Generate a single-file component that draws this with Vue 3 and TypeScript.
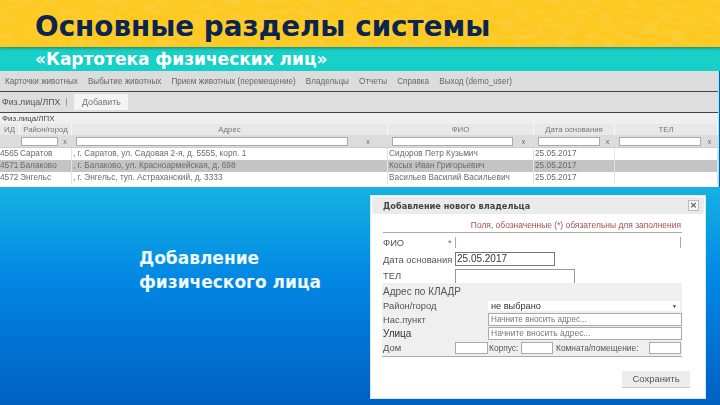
<script setup lang="ts">
const menu = ['Карточки животных', 'Выбытие животных', 'Прием животных (перемещение)', 'Владельцы', 'Отчеты', 'Справка', 'Выход (demo_user)']

const columns = [
  { title: 'ИД', filter: 0 },
  { title: 'Район/город', filter: 37 },
  { title: 'Адрес', filter: 272 },
  { title: 'ФИО', filter: 121 },
  { title: 'Дата основания', filter: 62 },
  { title: 'ТЕЛ', filter: 82 }
]

const rows = [
  ['4565', 'Саратов', ', г. Саратов, ул. Садовая 2-я, д. 5555, корп. 1', 'Сидоров Петр Кузьмич', '25.05.2017', ''],
  ['4571', 'Балаково', ', г. Балаково, ул. Красноармейская, д. 698', 'Косых Иван Григорьевич', '25.05.2017', ''],
  ['4572', 'Энгельс', ', г. Энгельс, туп. Астраханский, д. 3333', 'Васильев Василий Васильевич', '25.05.2017', '']
]
</script>

<template>
  <div class="slide">
    <header class="head">
      <svg class="grain" width="720" height="47" aria-hidden="true">
        <filter id="paper">
          <feTurbulence type="fractalNoise" baseFrequency="0.07 0.2" numOctaves="3" seed="7" />
          <feColorMatrix values="0 0 0 0 0.95  0 0 0 0 0.62  0 0 0 0 0.05  2.4 0 0 0 -1" />
        </filter>
        <rect width="720" height="47" filter="url(#paper)" />
      </svg>
      <h1>Основные разделы системы</h1>
    </header>
    <div class="band">«Картотека физических лиц»</div>

    <section class="app">
      <nav class="menu">
        <span v-for="m in menu" :key="m">{{ m }}</span>
      </nav>
      <div class="tabs">
        <span>Физ.лица/ЛПХ</span>
        <i class="sep"></i>
        <span class="tab">Добавить</span>
      </div>
      <div class="caption">Физ.лица/ЛПХ</div>
      <div class="grid head-row">
        <div v-for="c in columns" :key="c.title" class="cell">{{ c.title }}</div>
      </div>
      <div class="grid filter-row">
        <div v-for="c in columns" :key="c.title" class="fcell">
          <template v-if="c.filter">
            <b class="finput" :style="{ width: c.filter + 'px' }"></b>
            <em>x</em>
          </template>
        </div>
      </div>
      <div v-for="(r, i) in rows" :key="r[0]" class="grid row" :class="{ picked: i === 1 }">
        <div v-for="(v, j) in r" :key="j" class="cell">{{ v }}</div>
      </div>
    </section>

    <main class="body">
      <p class="note">Добавление<br>физического лица</p>
    </main>

    <aside class="dialog">
      <div class="dlg-title">
        <span>Добавление нового владельца</span>
        <b class="close">×</b>
      </div>
      <div class="hint">Поля, обозначенные (*) обязательны для заполнения</div>
      <div class="form">
        <div class="line first">
          <label>ФИО<i>*</i></label>
          <b class="field fio"></b>
        </div>
        <div class="line">
          <label>Дата основания</label>
          <b class="field date">25.05.2017</b>
        </div>
        <div class="line">
          <label>ТЕЛ</label>
          <b class="field tel"></b>
        </div>
      </div>
      <div class="kladr">
        <div class="k-title">Адрес по КЛАДР</div>
        <div class="line city">
          <label>Район/город</label>
          <b class="select">не выбрано<u>▼</u></b>
        </div>
        <div class="line">
          <label>Нас.пункт</label>
          <b class="field addr small">Начните вносить адрес...</b>
        </div>
        <div class="line">
          <label class="dark">Улица</label>
          <b class="field addr">Начните вносить адрес...</b>
        </div>
        <div class="line house">
          <label>Дом</label>
          <b class="field s1"></b>
          <span>Корпус:</span>
          <b class="field s2"></b>
          <span class="room">Комната/помещение:</span>
          <b class="field s3"></b>
        </div>
      </div>
      <div class="actions"><span class="save">Сохранить</span></div>
    </aside>
  </div>
</template>

<style>
body {
  margin: 0;
  background: #0060c0;
}
</style>

<style scoped>
.slide {
  position: relative;
  width: 720px;
  height: 405px;
  overflow: hidden;
  display: flex;
  flex-direction: column;
  font-family: "DejaVu Sans", sans-serif;
  background: #0060c0;
}

.head {
  position: relative;
  height: 47px;
  flex: none;
  background: #fec91f;
  box-shadow: 0 1px 3px rgba(60, 70, 20, 0.6);
  z-index: 1;
}
.grain {
  position: absolute;
  inset: 0;
}
h1 {
  position: relative;
  margin: 0;
  padding: 8px 0 0 35px;
  font-size: 27.8px;
  line-height: 38px;
  font-weight: 700;
  color: #0b2450;
  white-space: nowrap;
}

.band {
  height: 24px;
  flex: none;
  padding-left: 35px;
  box-sizing: border-box;
  background: #17d0c8;
  color: #fff;
  font-size: 17px;
  font-weight: 700;
  line-height: 25px;
  white-space: nowrap;
}

.app {
  height: 116px;
  flex: none;
  width: 718px;
  border-right: 1px solid #9fe8f0;
  background: #fff;
  color: #555;
  font-size: 7.2px;
  filter: blur(0.45px);
  font-family: "Liberation Sans", Arial, sans-serif;
}
.menu {
  height: 20px;
  display: flex;
  gap: 10.1px;
  padding-left: 5px;
  align-items: center;
  background: #dcdcdc;
  border-bottom: 1px solid #444;
  font-size: 8.15px;
  color: #666;
  white-space: nowrap;
}
.tabs {
  height: 20px;
  display: flex;
  align-items: center;
  gap: 5px;
  padding-left: 2px;
  background: #dedede;
  border-bottom: 1px solid #444;
  font-size: 8.8px;
}
.sep {
  width: 1px;
  height: 8px;
  margin-left: 1px;
  background: #a98;
}
.tab {
  height: 16px;
  width: 54px;
  margin-left: 2px;
  background: #f4f4f4;
  text-align: center;
  line-height: 16px;
  color: #777;
}
.caption {
  height: 11px;
  line-height: 11px;
  padding-left: 2px;
  background: #efefef;
  color: #444;
  font-size: 7.9px;
}
.grid {
  display: grid;
  grid-template-columns: 20px 52px 316px 146px 81px 103px;
}
.head-row {
  height: 11px;
  background: #e8e8e8;
  line-height: 11px;
  text-align: center;
  color: #777;
  font-size: 7.8px;
}
.head-row .cell {
  border-right: 1px solid #f8f8f8;
  white-space: nowrap;
}
.filter-row {
  height: 12px;
  background: #dcdcdc;
  border-bottom: 1px solid #ccc;
}
.fcell {
  display: flex;
  align-items: center;
  padding-left: 4px;
}
.fcell:nth-child(2) {
  padding-left: 1px;
}
.finput {
  flex: none;
  box-sizing: border-box;
  height: 9px;
  background: #fff;
  border: 1px solid #aaa;
}
.fcell em {
  flex: 1;
  text-align: center;
  font-style: normal;
  font-size: 7px;
  color: #666;
}
.row {
  height: 12px;
  line-height: 11px;
  font-size: 8.3px;
  background: #fff;
  white-space: nowrap;
}
.row .cell {
  overflow: hidden;
  padding-left: 1px;
  border-right: 1px solid #e4e4e4;
  color: #6a6a6a;
}
.row .cell:first-child {
  padding-left: 0;
  border-right: 0;
}
.row .cell:nth-child(2) {
  padding-left: 0;
}
.picked {
  background: #c4c4c4;
}

.body {
  flex: 1;
  background: linear-gradient(#15b2e2, #0287e4 42%, #0060c0);
}
.note {
  margin: 0;
  padding: 59px 0 0 139px;
  color: #eef8ff;
  font-size: 17px;
  font-weight: 700;
  line-height: 24px;
}

.dialog {
  position: absolute;
  left: 370px;
  top: 195px;
  width: 336px;
  height: 204px;
  box-sizing: border-box;
  background: #fff;
  border: 1px solid #d8e8f0;
  color: #555;
  font-family: "Liberation Sans", Arial, sans-serif;
  font-size: 9.4px;
  filter: blur(0.3px);
}
.dlg-title {
  height: 17px;
  margin: 1px 1px 0;
  padding: 0 5px 0 11px;
  display: flex;
  justify-content: space-between;
  align-items: center;
  background: #ebebeb;
  border-radius: 3px;
  font-family: "DejaVu Sans", sans-serif;
  font-size: 8.2px;
  font-weight: 700;
  color: #444;
}
.close {
  width: 9px;
  height: 9px;
  border: 1px solid #bbb;
  background: #f6f6f6;
  color: #555;
  text-align: center;
  line-height: 9px;
  font-size: 9px;
}
.hint {
  margin: 7px 23px 0 12px;
  padding: 0 1px 2px 0;
  border-bottom: 1px solid #aaa;
  text-align: right;
  color: #a05050;
  font-size: 8.45px;
  line-height: 9px;
  white-space: nowrap;
}
.form {
  padding-left: 12px;
}
.line {
  display: flex;
  align-items: center;
  height: 16px;
}
.line.first {
  height: 18px;
}
.line label {
  width: 72px;
  flex: none;
  position: relative;
  color: #555;
  white-space: nowrap;
}
.line label i {
  position: absolute;
  left: 65px;
  color: #a05050;
  font-style: normal;
}
.line label.dark {
  color: #333;
  font-size: 10px;
}
.field {
  display: block;
  box-sizing: border-box;
  font-weight: 400;
  background: #fff;
  border: 1px solid #aaa;
}
.fio {
  width: 226px;
  height: 11px;
  border-width: 0 1px;
}
.date {
  width: 100px;
  height: 14px;
  border-color: #777;
  color: #333;
  font-size: 10px;
  line-height: 12px;
  padding-left: 1px;
}
.tel {
  width: 120px;
  height: 14px;
  align-self: flex-end;
  border-bottom: 0;
  border-color: #999;
}
.kladr {
  box-sizing: border-box;
  margin-left: 11px;
  padding-left: 1px;
  width: 300px;
  height: 74px;
  background: #efefef;
  border-bottom: 1px solid #aaa;
}
.k-title {
  height: 16px;
  line-height: 18px;
  font-size: 10px;
}
.kladr .line {
  height: 14px;
}
.kladr .line.city {
  height: 13px;
}
.kladr .line.house {
  height: 15px;
}
.select {
  display: flex;
  justify-content: space-between;
  align-items: center;
  margin-left: 33px;
  width: 192px;
  box-sizing: border-box;
  height: 10px;
  padding: 0 3px;
  background: #fff;
  color: #333;
  font-weight: 400;
  font-size: 9.2px;
}
.select u {
  text-decoration: none;
  font-size: 5px;
}
.addr {
  margin-left: 33px;
  width: 194px;
  height: 13px;
  line-height: 11px;
  padding-left: 2px;
  font-size: 8.5px;
  color: #777;
}
.addr.small {
  font-size: 8.2px;
}
.house span {
  width: 33px;
  font-size: 8.4px;
  padding-left: 1px;
  box-sizing: border-box;
  white-space: nowrap;
  flex: none;
}
.house .room {
  width: 96px;
  padding-left: 3px;
}
.s1 {
  width: 33px;
  height: 12px;
}
.s2 {
  width: 32px;
  height: 12px;
}
.s3 {
  width: 32px;
  height: 12px;
}
.actions {
  display: flex;
  justify-content: flex-end;
  padding: 14px 15px 0 0;
}
.save {
  width: 68px;
  height: 16px;
  background: #ececec;
  border-bottom: 1px solid #ccc;
  text-align: center;
  line-height: 16px;
  font-size: 9.5px;
  color: #555;
}
</style>
